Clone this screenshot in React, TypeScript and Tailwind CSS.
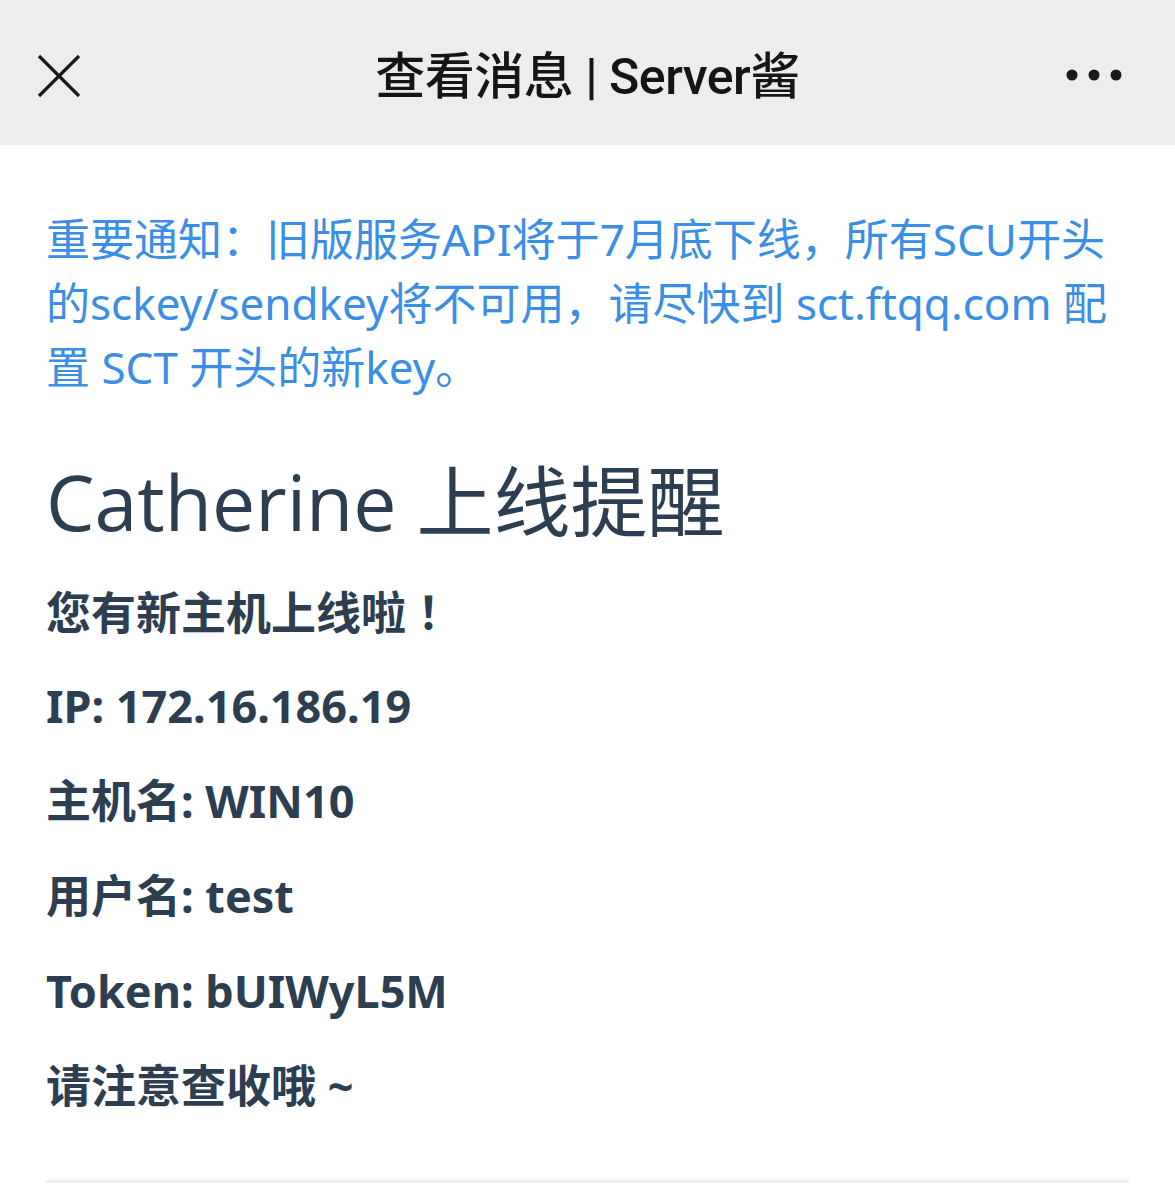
const lines = [
  'IP: 172.16.186.19',
  '主机名: WIN10',
  '用户名: test',
  'Token: bUIWyL5M',
  '请注意查收哦 ~',
];

export default function App() {
  return (
    <div className="min-h-[1188px] bg-white font-['Noto_Sans','Noto_Sans_CJK_SC',sans-serif]">
      <header className="relative flex h-[145px] items-center justify-center bg-[#ededed] pt-[10px]">
        <svg className="absolute left-[36px] top-[54px]" width="46" height="44" viewBox="0 0 46 44">
          <path d="M3 2 L43 42 M43 2 L3 42" stroke="#1a1a1a" strokeWidth="3.2" fill="none" />
        </svg>
        <h1 className="font-['Roboto','Noto_Sans_CJK_SC',sans-serif] text-[50px] font-medium tracking-[-0.5px] text-[#151515]">
          查看消息 | Server酱
        </h1>
        <svg className="absolute left-[1064px] top-[68px]" width="60" height="14" viewBox="0 0 60 14">
          <circle cx="8" cy="7" r="5.5" fill="#1a1a1a" />
          <circle cx="30" cy="7" r="5.5" fill="#1a1a1a" />
          <circle cx="52" cy="7" r="5.5" fill="#1a1a1a" />
        </svg>
      </header>

      <main className="px-[46px] pt-[62px]">
        <p className="text-[44px] leading-[64px] text-[#3a8ee6]">
          重要通知：旧版服务API将于7月底下线，所有SCU开头的sckey/sendkey将不可用，请尽快到 sct.ftqq.com 配置 SCT 开头的新key。
        </p>

        <h2 className="mt-[56px] font-['Open_Sans','Noto_Sans_CJK_SC',sans-serif] text-[77px] leading-[94px] text-[#2c3e50]">
          Catherine 上线提醒
        </h2>

        <div className="mt-[14px] text-[45px] font-bold leading-[95px] text-[#2c3e50]">
          <p className="font-['Noto_Sans_CJK_SC',sans-serif]">
            您有新主机上线啦<span className="font-['Noto_Sans_CJK_JP',sans-serif]">！</span>
          </p>
          {lines.map((line) => (
            <p key={line}>{line}</p>
          ))}
        </div>

        <div className="mt-[47px] h-[3px] bg-[#eceeef]" />
      </main>
    </div>
  );
}
